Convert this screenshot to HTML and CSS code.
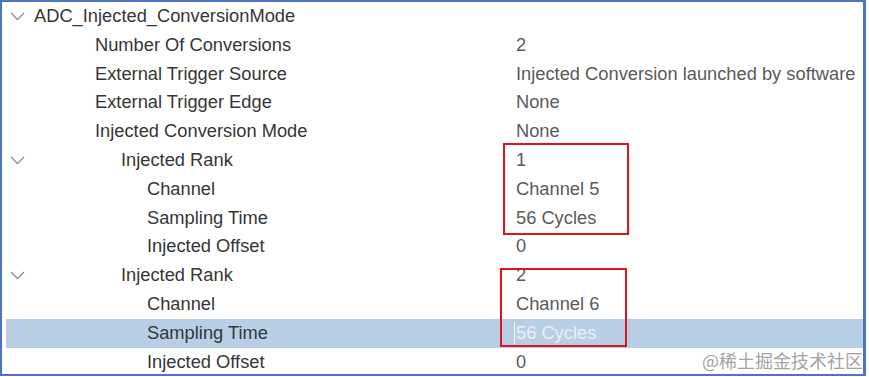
FILE: index.html
```html
<!DOCTYPE html>
<html lang="en">
<head>
    <meta charset="UTF-8">
    <meta name="viewport" content="width=device-width, initial-scale=1.0">
    <title>ADC Injected Conversion Mode</title>
    <link rel="stylesheet" href="styles.css">
</head>
<body>
    <div class="frame">
        <div class="tree">
            <div class="row">
                <span class="toggle"><svg width="15" height="9" viewBox="0 0 15 9"><polyline points="1,1 7.5,7.5 14,1"/></svg></span>
                <span class="label lvl0">ADC_Injected_ConversionMode</span>
                <span class="value"></span>
            </div>
            <div class="row">
                <span class="toggle"></span>
                <span class="label lvl1">Number Of Conversions</span>
                <span class="value">2</span>
            </div>
            <div class="row">
                <span class="toggle"></span>
                <span class="label lvl1">External Trigger Source</span>
                <span class="value">Injected Conversion launched by software</span>
            </div>
            <div class="row">
                <span class="toggle"></span>
                <span class="label lvl1">External Trigger Edge</span>
                <span class="value">None</span>
            </div>
            <div class="row">
                <span class="toggle"></span>
                <span class="label lvl1">Injected Conversion Mode</span>
                <span class="value">None</span>
            </div>
            <div class="row">
                <span class="toggle"><svg width="15" height="9" viewBox="0 0 15 9"><polyline points="1,1 7.5,7.5 14,1"/></svg></span>
                <span class="label lvl2">Injected Rank</span>
                <span class="value">1</span>
            </div>
            <div class="row">
                <span class="toggle"></span>
                <span class="label lvl3">Channel</span>
                <span class="value">Channel 5</span>
            </div>
            <div class="row">
                <span class="toggle"></span>
                <span class="label lvl3">Sampling Time</span>
                <span class="value">56 Cycles</span>
            </div>
            <div class="row">
                <span class="toggle"></span>
                <span class="label lvl3">Injected Offset</span>
                <span class="value">0</span>
            </div>
            <div class="row">
                <span class="toggle"><svg width="15" height="9" viewBox="0 0 15 9"><polyline points="1,1 7.5,7.5 14,1"/></svg></span>
                <span class="label lvl2">Injected Rank</span>
                <span class="value">2</span>
            </div>
            <div class="row">
                <span class="toggle"></span>
                <span class="label lvl3">Channel</span>
                <span class="value">Channel 6</span>
            </div>
            <div class="row selected">
                <span class="toggle"></span>
                <span class="label lvl3">Sampling Time</span>
                <span class="value"><span class="caret">56 Cycles</span></span>
            </div>
            <div class="row">
                <span class="toggle"></span>
                <span class="label lvl3">Injected Offset</span>
                <span class="value">0</span>
            </div>
        </div>

        <!-- annotation boxes -->
        <div class="mark mark-1"></div>
        <div class="mark mark-2"></div>

        <div class="watermark">@稀土掘金技术社区</div>
    </div>
</body>
</html>
```

FILE: styles.css
```css
* {
    margin: 0;
    padding: 0;
    box-sizing: border-box;
}

body {
    background: #fff;
    font-family: "Liberation Sans", Arial, sans-serif;
    font-size: 18.3px;
}

.frame {
    position: relative;
    width: 866px;
    height: 376px;
    border: 2px solid #4c73c6;
    border-right-width: 3px;
    overflow: hidden;
}

.tree {
    padding-left: 4px;
}

.row {
    display: grid;
    grid-template-columns: 28px 482px 1fr;
    align-items: center;
    height: 28.8px;
    line-height: 28.8px;
    white-space: nowrap;
}

.row.selected {
    background: #b8cee5;
}

.toggle {
    display: flex;
    align-items: center;
    height: 100%;
    padding-left: 4px;
}

.toggle svg polyline {
    fill: none;
    stroke: #8c8c8c;
    stroke-width: 1.3;
}

.label {
    color: #363636;
}

.lvl0 { padding-left: 0; }
.lvl1 { padding-left: 61px; }
.lvl2 { padding-left: 87px; }
.lvl3 { padding-left: 113px; }

.value {
    color: #5a5a5a;
}

.selected .value {
    color: #e9f0f8;
}

.caret {
    display: inline-block;
    line-height: 22px;
    margin-left: -2px;
    padding-left: 1px;
    border-left: 1px solid #f4f8fc;
}

.mark {
    position: absolute;
    border: 2px solid #e0141c;
}

.mark-1 {
    left: 501px;
    top: 141px;
    width: 126px;
    height: 92px;
}

.mark-2 {
    left: 498px;
    top: 266px;
    width: 127px;
    height: 79px;
}

.watermark {
    position: absolute;
    right: 0;
    top: 346px;
    font-family: "Noto Sans CJK SC", sans-serif;
    font-size: 18px;
    line-height: 24px;
    color: #a3a3a3;
}
```
